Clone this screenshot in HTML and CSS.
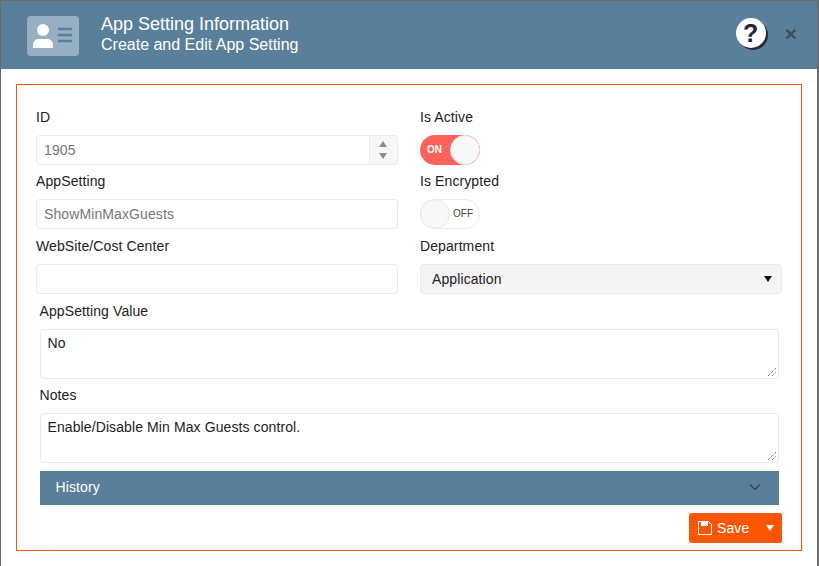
FILE: index.html
```html
<!DOCTYPE html>
<html lang="en">
<head>
<meta charset="utf-8">
<title>App Setting Information</title>
<link rel="stylesheet" href="styles.css">
</head>
<body>
<div class="modal">
  <header class="head">
    <div class="logo">
      <svg width="52" height="40" viewBox="0 0 52 40"><circle cx="16" cy="14" r="6" fill="#fff"/><path d="M6 31v-2.500C6 25 9 23 12 23h8c3 0 6 2 6 5.500V31c0 .6-.4 1-1 1H7c-.6 0-1-.4-1-1z" fill="#fff"/><path d="M31 13h14M31 19h14M31 25h14" stroke="#5a7f9a" stroke-width="2.500" fill="none"/></svg>
    </div>
    <div class="titles">
      <div class="title">App Setting Information</div>
      <div class="subtitle">Create and Edit App Setting</div>
    </div>
    <div class="help">?</div>
    <div class="close">×</div>
  </header>
  <main class="content">
    <form class="box">
      <div class="grid">
        <div class="field">
          <label class="lab">ID</label>
          <div class="input num"><span class="ro">1905</span>
            <span class="spin"><i class="up"></i><i class="down"></i></span>
          </div>
        </div>
        <div class="field">
          <label class="lab">Is Active</label>
          <div class="toggle on"><span class="tlabel">ON</span><span class="knob"></span></div>
        </div>
        <div class="field">
          <label class="lab">AppSetting</label>
          <div class="input"><span class="ro">ShowMinMaxGuests</span></div>
        </div>
        <div class="field">
          <label class="lab">Is Encrypted</label>
          <div class="toggle off"><span class="knob"></span><span class="tlabel">OFF</span></div>
        </div>
        <div class="field tall">
          <label class="lab">WebSite/Cost Center</label>
          <div class="input"></div>
        </div>
        <div class="field tall">
          <label class="lab">Department</label>
          <div class="input select"><span>Application</span><i class="caret"></i></div>
        </div>
      </div>
      <div class="wide">
        <label class="lab">AppSetting Value</label>
        <div class="area">No<svg class="grip" width="10" height="10" viewBox="0 0 10 10"><path d="M1 9L9 1M5 9L9 5" stroke="#444" stroke-width="1" stroke-dasharray="1 1" fill="none"/></svg></div>
        <label class="lab second">Notes</label>
        <div class="area">Enable/Disable Min Max Guests control.<svg class="grip" width="10" height="10" viewBox="0 0 10 10"><path d="M1 9L9 1M5 9L9 5" stroke="#444" stroke-width="1" stroke-dasharray="1 1" fill="none"/></svg></div>
        <div class="history"><span>History</span>
          <svg width="12" height="8" viewBox="0 0 12 8"><path d="M1 1.500l5 5 5-5" stroke="#36495a" stroke-width="1.500" fill="none"/></svg>
        </div>
      </div>
      <div class="actions">
        <button type="button" class="save">
          <svg width="14" height="14" viewBox="0 0 14 14"><path d="M.5.500h10l3 3v10H.500z" stroke="#fff" fill="none"/><path d="M3 1h7v4H3z" fill="#fff"/></svg>
          <span>Save</span><i class="savecaret"></i>
        </button>
      </div>
    </form>
  </main>
</div>
</body>
</html>
```
FILE: styles.css
```css
* { box-sizing: border-box; }
html, body { margin: 0; height: 100%; }
body {
  background: #6b6b6b;
  padding: 1px 2px 0 1px;
  overflow: hidden;
  font-family: "Liberation Sans", Arial, sans-serif;
  font-size: 14px;
  letter-spacing: .1px;
  color: #222;
}
.modal { background: #fff; height: 565px; display: flex; flex-direction: column; }
.head {
  height: 68px;
  background: #5a7f9a;
  color: #fff;
  display: flex;
  align-items: center;
  padding: 0 20px 0 26px;
}
.logo {
  width: 52px; height: 40px;
  background: #96afc1;
  border-radius: 4px;
  display: flex;
  margin-top: 2px;
}
.titles { margin-left: 22px; flex: 1; margin-top: -2px; }
.title { font-size: 18px; line-height: 22px; letter-spacing: 0; }
.subtitle { font-size: 16px; line-height: 20px; letter-spacing: 0; }
.help {
  width: 30px; height: 30px;
  border-radius: 50%;
  background: #fff;
  color: #26223a;
  font: bold 25px/30px "Liberation Sans", Arial, sans-serif;
  text-align: center;
  box-shadow: 2px 2px 0 #2a2438;
  margin-right: 19px;
  margin-top: -4px;
}
.close { color: #3d4c58; font: bold 21px/20px "Liberation Sans", Arial, sans-serif; margin-top: -2px; }
.content { padding: 15px 15px 0; }
.box {
  width: 786px;
  height: 467px;
  border: 1px solid #ff5500;
  padding: 22px 19px 0;
}
.grid { display: grid; grid-template-columns: 362px 362px; column-gap: 22px; }
.field { height: 64px; }
.field.tall { height: 65px; padding-top: 1px; }
.lab { display: block; line-height: 20px; color: #222; }
.field .lab { margin-bottom: 8px; }
.input {
  height: 30px;
  border: 1px solid #eaeaea;
  border-radius: 4px;
  padding: 0 8px 1px 7px;
  line-height: 28px;
  position: relative;
  background: #fff;
}
.ro { color: #777; }
.spin {
  position: absolute; right: 0; top: 0; bottom: 0;
  width: 28px;
  background: #f7f7f7;
  border-left: 1px solid #eaeaea;
  border-radius: 0 3px 3px 0;
  display: flex; flex-direction: column; align-items: center; justify-content: center; gap: 6px;
}
.spin i { width: 0; height: 0; border-left: 4.500px solid transparent; border-right: 4.500px solid transparent; margin-right: 2px; }
.spin .up { border-bottom: 6px solid #8c8c8c; }
.spin .down { border-top: 6px solid #8c8c8c; }
.toggle {
  width: 60px; height: 30px;
  border-radius: 15px;
  display: flex; align-items: center;
  font-size: 10px;
  letter-spacing: 0;
  padding-bottom: 0;
}
.tlabel { margin-top: -1px; }
.toggle.on { background: #ff625a; color: #fff; font-weight: bold; justify-content: space-between; padding-left: 7px; }
.toggle.off { border: 1px solid #eaeaea; color: #444; justify-content: space-between; padding-right: 6px; }
.knob {
  width: 30px; height: 30px;
  border-radius: 50%;
  background: #f8f8f8;
  border: 1px solid #e6e6e6;
}
.toggle.off .knob { margin: -1px 0 -1px -1px; }
.select {
  background: #f4f4f4;
  padding: 0 9px 0 11px;
  display: flex; align-items: center; justify-content: space-between;
  color: #222;
}
.caret { width: 0; height: 0; border-left: 4px solid transparent; border-right: 4px solid transparent; border-top: 6px solid #111; }
.wide { padding-left: 3.500px; width: 743px; }
.wide .lab { margin-top: 1px; margin-bottom: 8px; }
.wide .lab.second { margin-top: 6px; }
.area {
  position: relative;
  height: 50px;
  border: 1px solid #eaeaea;
  border-radius: 4px;
  padding: 4px 7px;
  line-height: 18px;
  background: #fff;
}
.grip { position: absolute; right: 1px; bottom: 1px; }
.history {
  height: 34px;
  margin-top: 8px;
  background: #5a7f9a;
  color: #fff;
  display: flex; align-items: center; justify-content: space-between;
  padding: 0 18px 2px 16px;
}
.actions { display: flex; justify-content: flex-end; margin-top: 8px; }
.save {
  width: 93px; height: 30px;
  background: #ff5500;
  color: #fff;
  border: 0; border-radius: 3px;
  display: flex; align-items: center;
  padding: 0 8px 0 9px;
  font: 14px "Liberation Sans", Arial, sans-serif;
  letter-spacing: .1px;
}
.save span { margin-left: 5px; flex: 1; text-align: left; }
.savecaret { width: 0; height: 0; border-left: 4px solid transparent; border-right: 4px solid transparent; border-top: 6px solid #fff; }
```
